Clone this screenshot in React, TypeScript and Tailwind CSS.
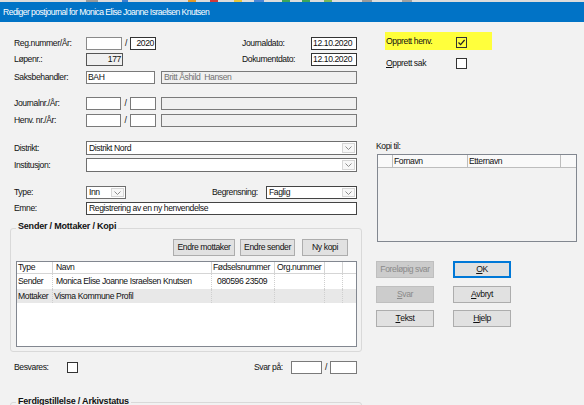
import React from "react";

const Chevron = () => (
  <svg width="7" height="4" viewBox="0 0 7 4">
    <path d="M0.5 0.5 L3.5 3.5 L6.5 0.5" fill="none" stroke="#8c8c8c" strokeWidth="1" />
  </svg>
);

const Check = () => (
  <svg width="9" height="9" viewBox="0 0 9 9">
    <path d="M1.5 4.5 L3.6 6.6 L7.6 2" fill="none" stroke="#222" strokeWidth="1.3" />
  </svg>
);

function Field({
  className = "",
  children,
  right = false,
}: {
  className?: string;
  children?: React.ReactNode;
  right?: boolean;
}) {
  return (
    <div
      className={`h-[13px] border flex items-center px-[1px] overflow-hidden whitespace-nowrap shrink-0 ${
        right ? "justify-end" : ""
      } ${className}`}
    >
      {children}
    </div>
  );
}

function Select({ className = "", children }: { className?: string; children?: React.ReactNode }) {
  return (
    <div className={`border bg-white flex items-center shrink-0 ${className}`}>
      <span className="flex-1 pl-[2px] whitespace-nowrap overflow-hidden">{children}</span>
      <div className="w-[13px] h-[calc(100%-2px)] mr-[1px] border border-[#d6d6d6] bg-[#f7f7f7] flex items-center justify-center">
        <Chevron />
      </div>
    </div>
  );
}

function Btn({ className = "", children }: { className?: string; children?: React.ReactNode }) {
  return (
    <div className={`h-[17px] flex items-center justify-center border shrink-0 whitespace-nowrap ${className}`}>
      {children}
    </div>
  );
}

function Box({ className = "", checked = false }: { className?: string; checked?: boolean }) {
  return (
    <div className={`w-[11px] h-[11px] border border-[#333] flex items-center justify-center shrink-0 ${className}`}>
      {checked ? <Check /> : null}
    </div>
  );
}

export default function App() {
  return (
    <div className="w-[584px] h-[405px] overflow-hidden bg-[#f2f2f2] text-[#111] text-[8.6px] tracking-[-0.4px] leading-none font-['Liberation_Sans',Arial,sans-serif]">
      {/* toolbar remnants */}
      <div className="h-[2px] flex bg-[#dcdcdc]">
        <span className="ml-[86px] w-[12px] bg-[#9a9a9a]" />
        <span className="ml-[24px] w-[6px] bg-[#3b7fd0]" />
        <span className="ml-[60px] w-[8px] bg-[#e39a2a]" />
        <span className="ml-[14px] w-[8px] bg-[#d23a3a]" />
        <span className="ml-[16px] w-[8px] bg-[#e8c63a]" />
        <span className="ml-[12px] w-[10px] bg-[#4a87d6]" />
        <span className="ml-[18px] w-[8px] bg-[#3ea55a]" />
        <span className="ml-[12px] w-[8px] bg-[#3ea55a]" />
        <span className="ml-[14px] w-[8px] bg-[#7ab85a]" />
        <span className="ml-[30px] w-[10px] bg-[#9a9a9a]" />
        <span className="ml-[30px] w-[10px] bg-[#a0a0a0]" />
      </div>
      {/* title bar */}
      <div className="h-[20px] bg-[#0173c6] text-white flex items-center pl-[3px] tracking-[-0.55px]">
        Rediger postjournal for Monica Elise Joanne Israelsen Knutsen
      </div>

      <div className="flex">
        {/* left column */}
        <div className="w-[364px] shrink-0 pl-[10px] pt-[15px]">
          <div className="pl-[4px]">
            <div className="flex items-center h-[13px]">
              <span className="w-[72px] shrink-0">Reg.nummer/År:</span>
              <Field className="w-[36px] bg-white border-[#8a8a8a]" />
              <span className="w-[8px] text-center shrink-0">/</span>
              <Field right className="w-[26px] bg-white border-[#333]">2020</Field>
              <span className="ml-[86px] w-[69px] shrink-0">Journaldato:</span>
              <Field className="w-[46px] bg-white border-[#333]">12.10.2020</Field>
            </div>
            <div className="flex items-center h-[13px] mt-[3px]">
              <span className="w-[72px] shrink-0">Løpenr.:</span>
              <Field right className="w-[37px] bg-[#f0f0f0] border-[#555]">177</Field>
              <span className="ml-[119px] w-[69px] shrink-0">Dokumentdato:</span>
              <Field className="w-[46px] bg-white border-[#333]">12.10.2020</Field>
            </div>
            <div className="flex items-center h-[13px] mt-[5px]">
              <span className="w-[72px] shrink-0">Saksbehandler:</span>
              <Field className="w-[69px] bg-white border-[#7a7a7a]">BAH</Field>
              <Field className="ml-[6px] w-[196px] bg-[#f0f0f0] border-[#7a7a7a] text-[#707070] pl-[2px]">
                Britt Åshild&nbsp; Hansen
              </Field>
            </div>

            <div className="flex items-center h-[13px] mt-[13px]">
              <span className="w-[72px] shrink-0">Journalnr./År:</span>
              <Field className="w-[35px] bg-white border-[#7a7a7a]" />
              <span className="w-[9px] text-center shrink-0">/</span>
              <Field className="w-[26px] bg-white border-[#7a7a7a]" />
              <Field className="ml-[5px] w-[196px] bg-[#f0f0f0] border-[#7a7a7a]" />
            </div>
            <div className="flex items-center h-[13px] mt-[4px]">
              <span className="w-[72px] shrink-0">Henv. nr./År:</span>
              <Field className="w-[35px] bg-white border-[#7a7a7a]" />
              <span className="w-[9px] text-center shrink-0">/</span>
              <Field className="w-[26px] bg-white border-[#7a7a7a]" />
              <Field className="ml-[5px] w-[196px] bg-[#f0f0f0] border-[#7a7a7a]" />
            </div>

            <div className="flex items-center h-[14px] mt-[14px]">
              <span className="w-[72px] shrink-0">Distrikt:</span>
              <Select className="w-[271px] h-[14px] border-[#6e6e6e]">Distrikt Nord</Select>
            </div>
            <div className="flex items-center h-[14px] mt-[3px]">
              <span className="w-[72px] shrink-0">Institusjon:</span>
              <Select className="w-[271px] h-[14px] border-[#6e6e6e]" />
            </div>

            <div className="flex items-center h-[13px] mt-[14px]">
              <span className="w-[72px] shrink-0">Type:</span>
              <Select className="w-[40px] h-[13px] border-[#6e6e6e]">Inn</Select>
              <span className="ml-[86px] w-[54px] shrink-0">Begrensning:</span>
              <Select className="w-[91px] h-[13px] border-[#444]">Faglig</Select>
            </div>
            <div className="flex items-center h-[13px] mt-[3px]">
              <span className="w-[72px] shrink-0">Emne:</span>
              <Field className="w-[271px] bg-white border-[#444] pl-[2px]">
                Registrering av en ny henvendelse
              </Field>
            </div>
          </div>

          {/* Sender / Mottaker / Kopi */}
          <fieldset className="mt-[5px] w-[352px] min-w-0 border border-[#d9d9d9] rounded-[3px] pb-[4px]">
            <legend className="ml-[5px] px-[2px] pb-[4px] leading-[12px] font-bold text-[9px] tracking-[-0.2px]">
              Sender / Mottaker / Kopi
            </legend>
            <div className="flex justify-end mt-[3px] pr-[13px]">
              <Btn className="w-[62px] bg-[#e1e1e1] border-[#adadad]">Endre mottaker</Btn>
              <Btn className="ml-[5px] w-[55px] bg-[#e1e1e1] border-[#adadad]">Endre sender</Btn>
              <Btn className="ml-[7px] w-[46px] bg-[#e1e1e1] border-[#adadad]">Ny kopi</Btn>
            </div>
            <div className="ml-[5px] mt-[5px] w-[341px] h-[86px] border border-[#828790] bg-white">
              <div className="grid grid-cols-[36px_159px_63px_50px_18px_1fr] h-[12px] border-b border-[#d5d5d5]">
                <div className="border-r border-[#d5d5d5] pl-[1px] flex items-center">Type</div>
                <div className="border-r border-[#d5d5d5] pl-[3px] flex items-center">Navn</div>
                <div className="border-r border-[#d5d5d5] pl-[1px] flex items-center whitespace-nowrap overflow-hidden">Fødselsnummer</div>
                <div className="border-r border-[#d5d5d5] pl-[2px] flex items-center whitespace-nowrap overflow-hidden">Org.nummer</div>
                <div className="border-r border-[#d5d5d5]" />
                <div />
              </div>
              <div className="grid grid-cols-[36px_159px_63px_50px_18px_1fr] h-[15px]">
                <div className="border-r border-dotted border-[#cfcfcf] pl-[1px] flex items-center">Sender</div>
                <div className="border-r border-dotted border-[#cfcfcf] pl-[3px] flex items-center whitespace-nowrap">
                  Monica Elise Joanne Israelsen Knutsen
                </div>
                <div className="border-r border-dotted border-[#cfcfcf] pl-[5px] flex items-center">080596 23509</div>
                <div className="border-r border-dotted border-[#cfcfcf]" />
                <div className="border-r border-dotted border-[#cfcfcf]" />
                <div />
              </div>
              <div className="grid grid-cols-[36px_159px_63px_50px_18px_1fr] h-[14px] bg-[#e8e8e8]">
                <div className="border-r border-dotted border-[#cfcfcf] pl-[1px] flex items-center">Mottaker</div>
                <div className="border-r border-dotted border-[#cfcfcf] pl-[1px] flex items-center whitespace-nowrap">
                  Visma Kommune Profil
                </div>
                <div className="border-r border-dotted border-[#cfcfcf]" />
                <div className="border-r border-dotted border-[#cfcfcf]" />
                <div className="border-r border-dotted border-[#cfcfcf]" />
                <div />
              </div>
            </div>
          </fieldset>

          <div className="pl-[4px] flex items-center h-[12px] mt-[9px]">
            <span className="w-[53px] shrink-0">Besvares:</span>
            <Box className="bg-white" />
            <span className="ml-[176px] w-[37px] shrink-0">Svar på:</span>
            <Field className="w-[31px] bg-white border-[#7a7a7a]" />
            <span className="w-[8px] text-center shrink-0">/</span>
            <Field className="w-[27px] bg-white border-[#7a7a7a]" />
          </div>

          <fieldset className="mt-[22px] w-[352px] min-w-0 h-[60px] border border-[#d9d9d9] rounded-[3px]">
            <legend className="ml-[5px] px-[2px] pb-[2px] leading-[12px] font-bold text-[9px] tracking-[-0.2px]">
              Ferdigstillelse / Arkivstatus
            </legend>
          </fieldset>
        </div>

        {/* right column */}
        <div className="flex-1 pl-[12px] pt-[10px]">
          <div className="ml-[9px] w-[107px] h-[18px] bg-[#ffff3c] flex items-center pl-[1px]">
            <span className="w-[70px] shrink-0">Opprett henv.</span>
            <Box className="mt-[3px]" checked />
          </div>
          <div className="ml-[9px] pl-[1px] mt-[8px] h-[11px] flex items-center">
            <span className="w-[70px] shrink-0">
              <span className="underline">O</span>pprett sak
            </span>
            <Box className="bg-white" />
          </div>

          <div className="mt-[72px] h-[10px] flex items-center">Kopi til:</div>
          <div className="mt-[3px] ml-[1px] w-[200px] h-[88px] border border-[#828790] bg-[#f2f2f2]">
            <div className="grid grid-cols-[15px_75px_93px_1fr] h-[13px] border-b border-[#bdbdbd] bg-[#f9f9f9]">
              <div className="border-r border-[#bdbdbd]" />
              <div className="border-r border-[#bdbdbd] pl-[1px] flex items-center">Fornavn</div>
              <div className="border-r border-[#bdbdbd] pl-[1px] flex items-center">Etternavn</div>
              <div />
            </div>
          </div>

          <div className="mt-[19px] flex">
            <Btn className="w-[58px] bg-[#cccccc] border-[#bfbfbf] text-[#8a8a8a]">Foreløpig svar</Btn>
            <Btn className="ml-[19px] w-[58px] bg-[#e1e1e1] border-[#0078d7] shadow-[inset_0_0_0_1px_#0078d7]">
              <span className="underline">O</span>K
            </Btn>
          </div>
          <div className="mt-[8px] flex">
            <Btn className="w-[58px] bg-[#cccccc] border-[#bfbfbf] text-[#8a8a8a]">
              <span className="underline">S</span>var
            </Btn>
            <Btn className="ml-[19px] w-[58px] bg-[#e1e1e1] border-[#adadad]">
              <span className="underline">A</span>vbryt
            </Btn>
          </div>
          <div className="mt-[7px] flex">
            <Btn className="w-[58px] bg-[#e1e1e1] border-[#adadad]">
              <span className="underline">T</span>ekst
            </Btn>
            <Btn className="ml-[19px] w-[58px] bg-[#e1e1e1] border-[#adadad]">
              <span className="underline">H</span>jelp
            </Btn>
          </div>
        </div>
      </div>
    </div>
  );
}
